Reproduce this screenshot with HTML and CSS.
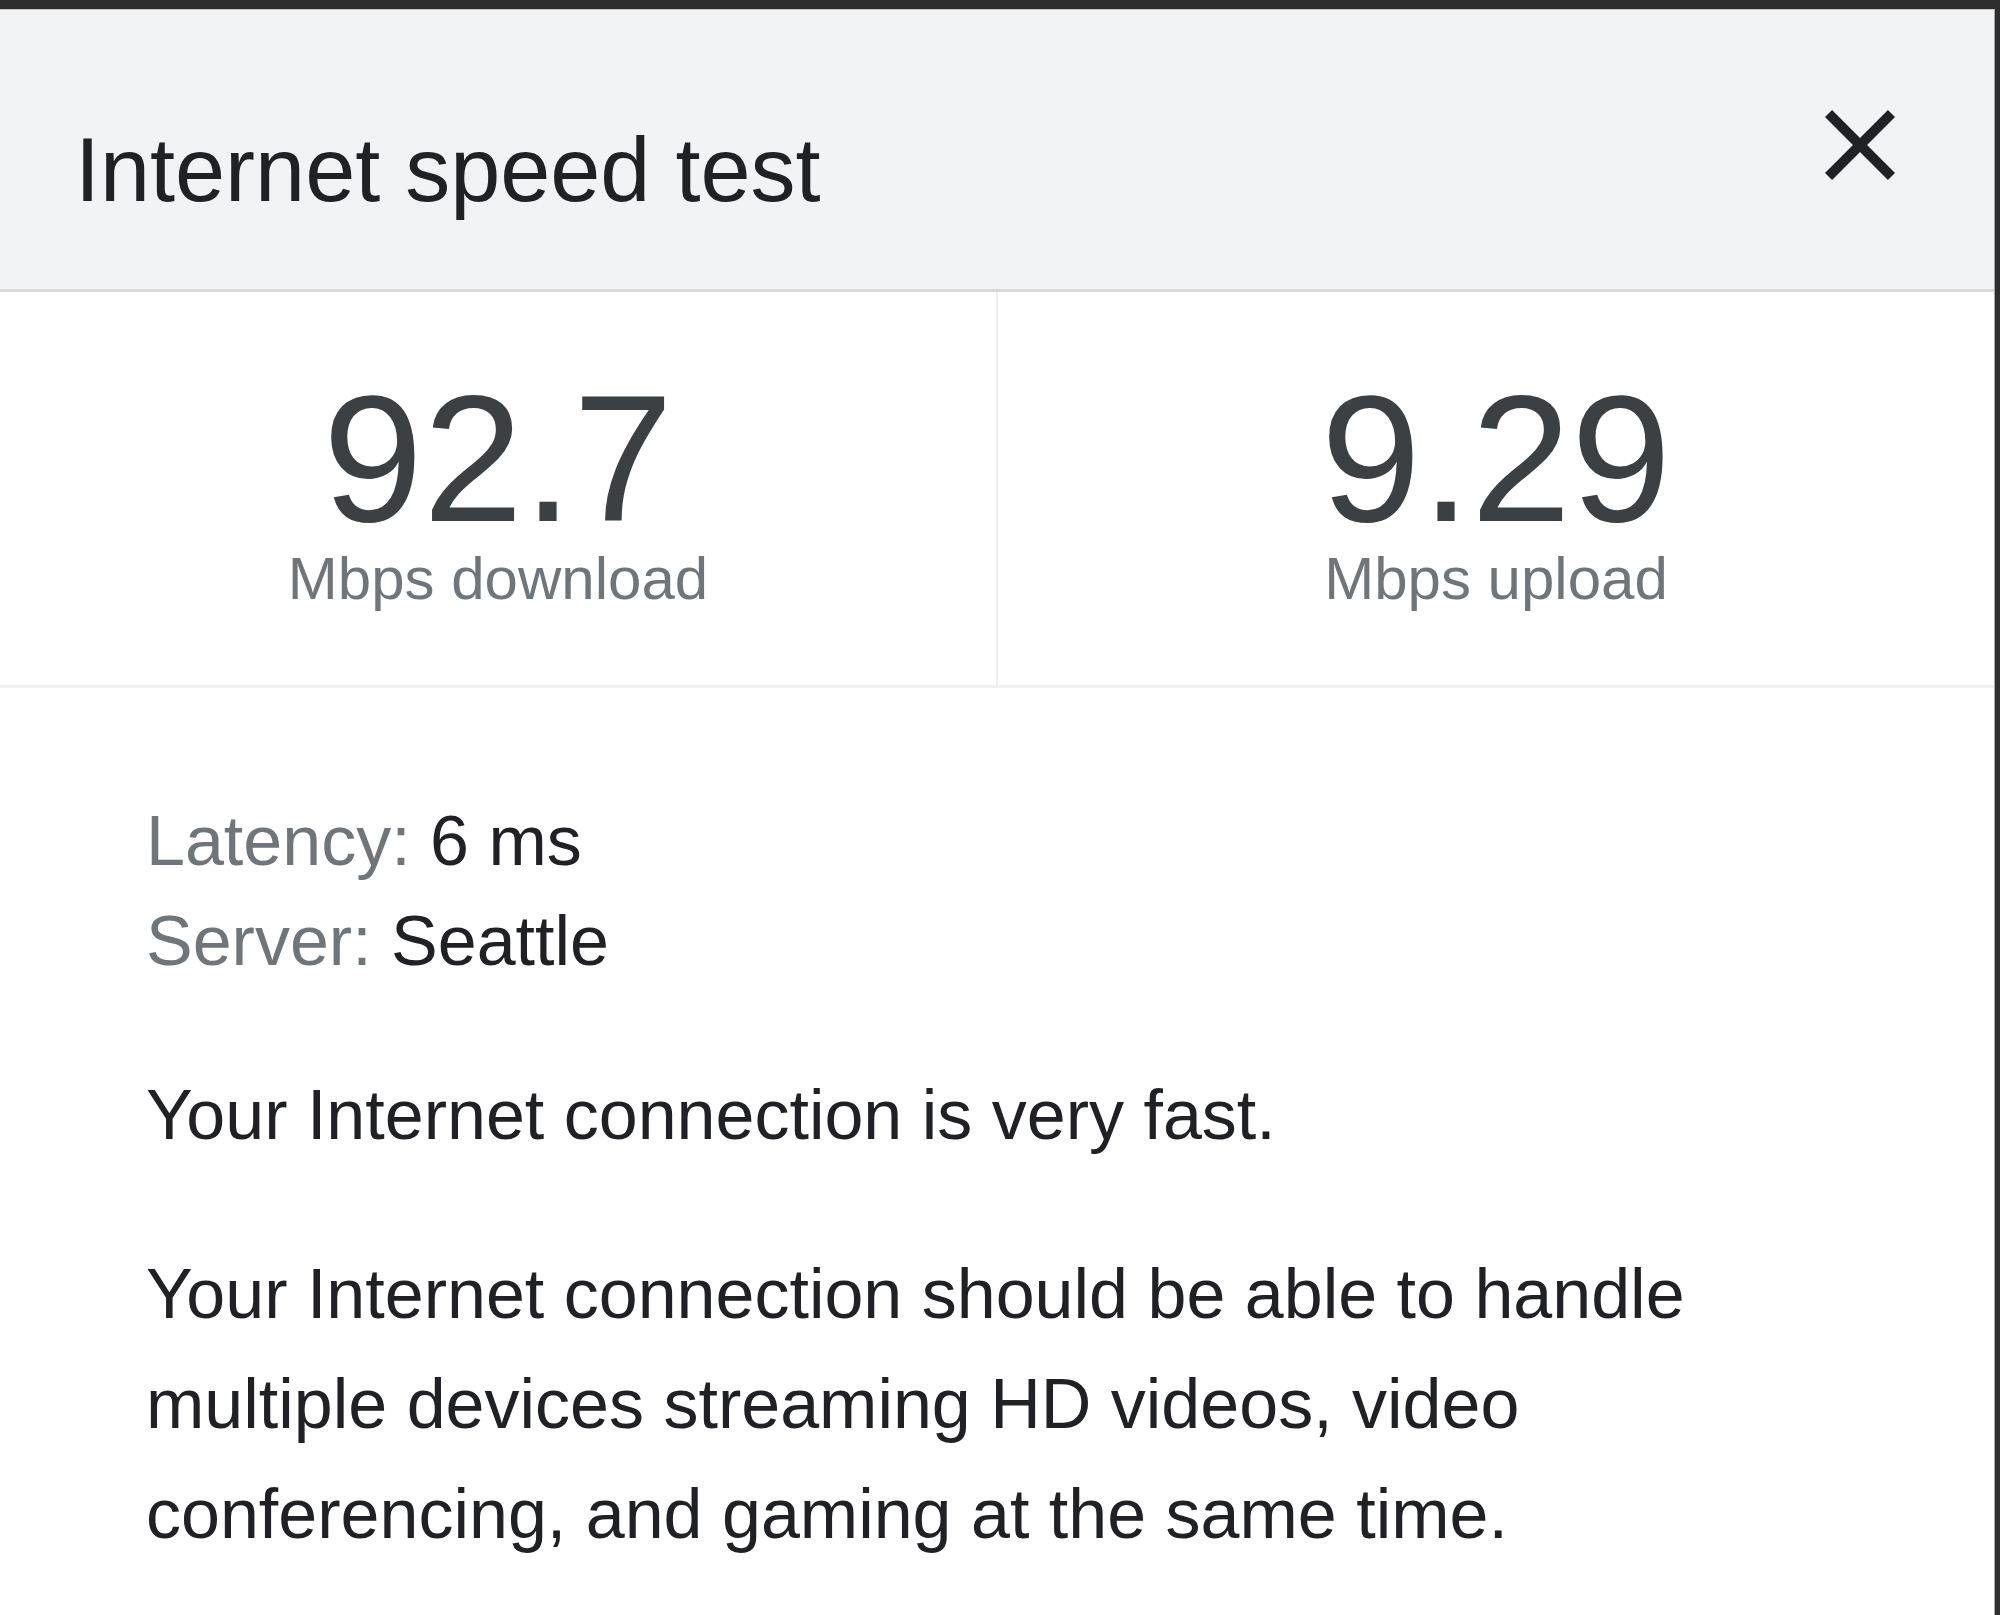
FILE: index.html
```html
<!DOCTYPE html>
<html lang="en">
<head>
  <meta charset="UTF-8">
  <meta name="viewport" content="width=device-width, initial-scale=1.0">
  <title>Internet speed test</title>
  <link rel="stylesheet" href="styles.css">
</head>
<body>
  <div class="panel">
    <div class="header">
      <h1 class="title">Internet speed test</h1>
      <span class="close">
        <svg width="120" height="120" viewBox="0 0 24 24">
          <path fill="#202124" d="M19 6.41L17.59 5 12 10.59 6.41 5 5 6.41 10.59 12 5 17.59 6.41 19 12 13.41 17.59 19 19 17.59 13.41 12z"/>
        </svg>
      </span>
    </div>

    <div class="stats">
      <div class="stat">
        <div class="num">92.7</div>
        <div class="unit">Mbps download</div>
      </div>
      <div class="stat">
        <div class="num">9.29</div>
        <div class="unit">Mbps upload</div>
      </div>
    </div>

    <div class="content">
      <div class="details">
        <div><span class="key">Latency:</span> 6 ms</div>
        <div><span class="key">Server:</span> Seattle</div>
      </div>
      <p class="first">Your Internet connection is very fast.</p>
      <p>Your Internet connection should be able to handle multiple devices streaming HD videos, video conferencing, and gaming at the same time.</p>
    </div>
  </div>
</body>
</html>
```

FILE: styles.css
```css
*{
  margin: 0;
  padding: 0;
  box-sizing: border-box;
}

body{
  background: #2e2e2e;
  font-family: "Liberation Sans", Arial, sans-serif;
  color: #202124;
  overflow: hidden;
}

.panel{
  margin: 9px 5px 0 0;
  min-height: calc(100vh - 9px);
  background: #fff;
  border-right: 1px solid #a8a8a8;
}

.header{
  display: flex;
  justify-content: space-between;
  align-items: flex-start;
  height: 283px;
  padding: 0 74px 0 75px;
  background: #f1f3f4;
  border-top: 1px solid #c9c9c9;
  border-bottom: 3px solid #d6d8db;
}

.title{
  margin-top: 115px;
  font-size: 90px;
  line-height: 90px;
  font-weight: normal;
  color: #202124;
}

.close{
  display: block;
  width: 120px;
  height: 120px;
  margin-top: 75px;
  cursor: pointer;
}
.close svg{
  display: block;
}

.stats{
  display: flex;
  border-bottom: 3px solid #efefef;
}

.stat{
  flex: 1;
  padding: 77px 0 76px;
  text-align: center;
}
.stat + .stat{
  border-left: 2px solid #eeeeee;
}

.num{
  font-size: 180px;
  line-height: 180px;
  color: #3c4043;
}

.unit{
  font-size: 60px;
  line-height: 60px;
  color: #70757a;
}

.content{
  padding: 103px 146px 0;
  font-size: 70px;
}

.details{
  line-height: 100px;
}

.key{
  color: #70757a;
}

.content p{
  margin-top: 69px;
  line-height: 110px;
}
.content p.first{
  margin-top: 69px;
}
```
